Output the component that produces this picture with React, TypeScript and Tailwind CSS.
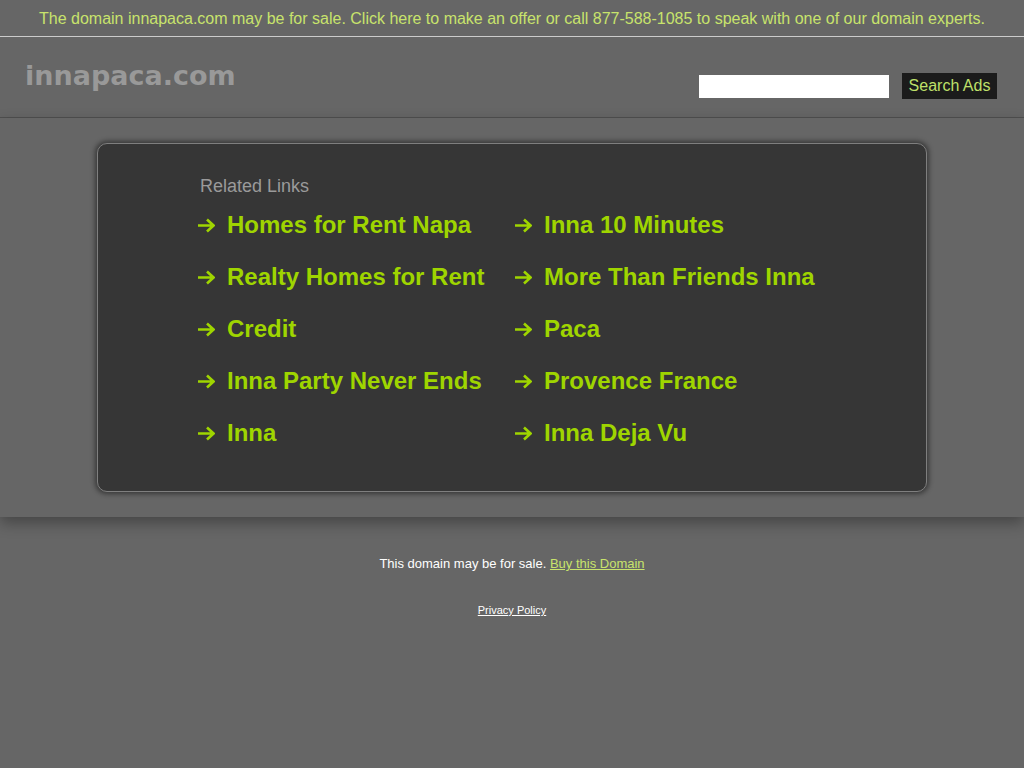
const links: [string, string][] = [
  ["Homes for Rent Napa", "Inna 10 Minutes"],
  ["Realty Homes for Rent", "More Than Friends Inna"],
  ["Credit", "Paca"],
  ["Inna Party Never Ends", "Provence France"],
  ["Inna", "Inna Deja Vu"],
];

function Arrow() {
  return (
    <svg width="18" height="15" viewBox="0 0 18 15" className="shrink-0" aria-hidden="true">
      <path d="M1 7.5H16M10 1.5L16.5 7.5L10 13.5" fill="none" stroke="#9fd500" strokeWidth="2.6" />
    </svg>
  );
}

function LinkRow({ label }: { label: string }) {
  return (
    <a href="#" className="flex h-[52px] items-center gap-[12px] text-[24px] font-bold text-[#9fd500]">
      <Arrow />
      <span className="leading-[28px]">{label}</span>
    </a>
  );
}

export default function App() {
  return (
    <main className="min-h-screen bg-[#666666] font-['Liberation_Sans',Arial,sans-serif]">
      <div className="h-[37px] border-b border-[#cccccc] pt-[1px] text-center text-[16px] leading-[35px] text-[#c8e36c]">
        The domain innapaca.com may be for sale. Click here to make an offer or call 877-588-1085 to speak with one of our domain experts.
      </div>

      <header className="flex h-[81px] justify-between border-b border-[#505050] pl-[25px] pr-[27px]">
        <div className="pt-[23px] font-['DejaVu_Sans',sans-serif] text-[27px] font-bold leading-[31px] text-[#999999]">
          innapaca.com
        </div>
        <form className="flex items-center gap-[13px] self-start pt-[36px]">
          <input type="text" className="h-[23px] w-[190px] border-0 bg-white px-1 text-[14px] outline-none" />
          <button type="button" className="h-[26px] w-[95px] bg-[#1b1b1b] text-center text-[16px] text-[#bfe06a]">
            Search Ads
          </button>
        </form>
      </header>

      <section className="relative z-10 bg-[#666666] py-[25px] shadow-[0_6px_14px_rgba(0,0,0,0.32)]">
        <div className="mx-auto w-[830px] rounded-[10px] border border-[#7f7f7f] bg-[#363636] pb-[32px] pl-[99px] pt-[32px] shadow-[0_0_5px_2px_rgba(0,0,0,0.45)]">
          <h2 className="pl-[3px] text-[18px] leading-[20px] text-[#9a9a9a]">Related Links</h2>
          <div className="mt-[3px] grid grid-cols-[317px_1fr]">
            {links.map(([left, right]) => (
              <div key={left} className="contents">
                <LinkRow label={left} />
                <LinkRow label={right} />
              </div>
            ))}
          </div>
        </div>
      </section>

      <footer className="pt-[38px] text-center text-white">
        <p className="text-[13px] leading-[18px]">
          This domain may be for sale.{" "}
          <a href="#" className="text-[#c8e36c] underline">
            Buy this Domain
          </a>
        </p>
        <p className="mt-[30px] text-[11px] leading-[14px]">
          <a href="#" className="underline">
            Privacy Policy
          </a>
        </p>
      </footer>
    </main>
  );
}
